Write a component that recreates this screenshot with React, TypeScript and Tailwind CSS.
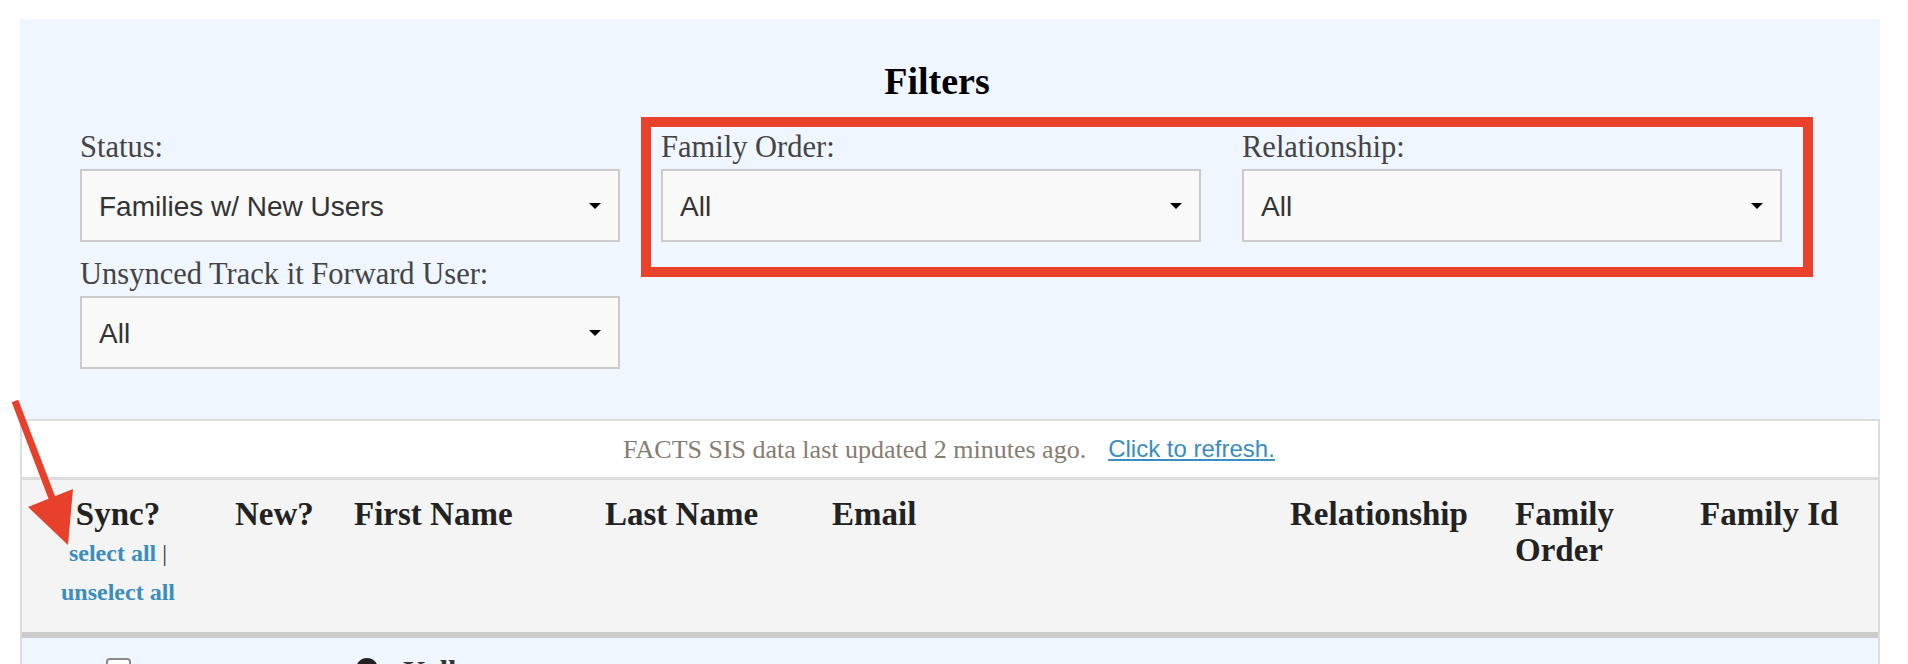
import React from "react";

type FieldProps = {
  label: string;
  value: string;
};

function Field({ label, value }: FieldProps) {
  return (
    <div>
      <p className="mb-[4px] text-[30.5px] leading-[36px] text-[#444444]">{label}</p>
      <div className="flex h-[73px] items-center justify-between border-2 border-[#cbcbcb] bg-[#f9f9f9] pl-[17px] pr-[17px] font-['Liberation_Sans',Arial,sans-serif] text-[28px] text-[#333333]">
        <span className="pt-[2px]">{value}</span>
        <span className="h-0 w-0 border-x-[6px] border-t-[6px] border-x-transparent border-t-black" />
      </div>
    </div>
  );
}

const headerCell = "pt-[16px] text-[33px] font-bold leading-[36px] text-[#222222]";

export default function App() {
  return (
    <div className="relative h-[664px] overflow-hidden bg-white pl-[20px] pt-[19px] font-['Liberation_Serif',Georgia,serif]">
      <div className="relative w-[1860px] bg-[#eff6ff]">
        <div className="pl-[60px] pt-[42px]">
          <h2 className="w-[1702px] pl-[12px] text-center text-[38px] font-bold leading-[41px] text-black">Filters</h2>
          <div className="mt-[27px] grid w-[1702px] grid-cols-[540px_540px_540px] gap-x-[41px] gap-y-[14px]">
            <Field label="Status:" value="Families w/ New Users" />
            <Field label="Family Order:" value="All" />
            <Field label="Relationship:" value="All" />
            <Field label="Unsynced Track it Forward User:" value="All" />
          </div>
        </div>

        {/* highlight box drawn over the two new filters */}
        <div className="pointer-events-none absolute left-[621px] top-[98px] h-[160px] w-[1172px] border-[10px] border-[#e9412b]" />

        <div className="mt-[50px] border-x-2 border-[#dddddd]">
          <div className="flex h-[58px] items-center border-t-2 border-[#dcdcdc] bg-white pl-[601px]">
            <span className="text-[26px] text-[#857c72]">FACTS SIS data last updated 2 minutes ago.</span>
            <a href="#" className="ml-[22px] font-['Liberation_Sans',Arial,sans-serif] text-[24px] text-[#3a8dbf] underline">
              Click to refresh.
            </a>
          </div>

          <div className="flex h-[161px] border-y-[3px] border-b-[6px] border-t-[#dddddd] border-b-[#cbcbcb] bg-[#f4f4f4]">
            <div className={`w-[213px] pr-[21px] text-center ${headerCell}`}>
              <div>Sync?</div>
              <div className="pt-[2px] text-[24px] leading-[39px]">
                <a href="#" className="text-[#3b8dbd]">select all</a>
                <span className="font-normal text-[#333333]"> |</span>
              </div>
              <div className="text-[24px] leading-[39px]">
                <a href="#" className="text-[#3b8dbd]">unselect all</a>
              </div>
            </div>
            <div className={`w-[119px] ${headerCell}`}>New?</div>
            <div className={`w-[251px] ${headerCell}`}>First Name</div>
            <div className={`w-[227px] ${headerCell}`}>Last Name</div>
            <div className={`w-[458px] ${headerCell}`}>Email</div>
            <div className={`w-[225px] ${headerCell}`}>Relationship</div>
            <div className={`w-[185px] pr-[36px] ${headerCell}`}>Family Order</div>
            <div className={`flex-1 ${headerCell}`}>Family Id</div>
          </div>

          <div className="flex h-[60px] pt-[20px]">
            <div className="w-[213px] pr-[21px] text-center">
              <span className="inline-block h-[25px] w-[25px] rounded-[4px] border-2 border-[#8a8a8a] bg-white" />
            </div>
            <div className="w-[119px]" />
            <div className="flex w-[251px] items-start gap-[25px] pl-[2px]">
              <span className="h-[22px] w-[22px] shrink-0 rounded-full bg-[#222222]" />
              <span className="mt-[-5px] text-[30px] font-bold leading-[36px] text-[#333333]">Kelly</span>
            </div>
          </div>
        </div>
      </div>

      {/* annotation arrow pointing at select all */}
      <svg className="pointer-events-none absolute left-0 top-[390px]" width="90" height="170" viewBox="0 0 90 170">
        <line x1="15" y1="11" x2="52" y2="108" stroke="#e8412b" strokeWidth="7" />
        <polygon points="28,117 73,99 68,155" fill="#e8412b" />
      </svg>
    </div>
  );
}
